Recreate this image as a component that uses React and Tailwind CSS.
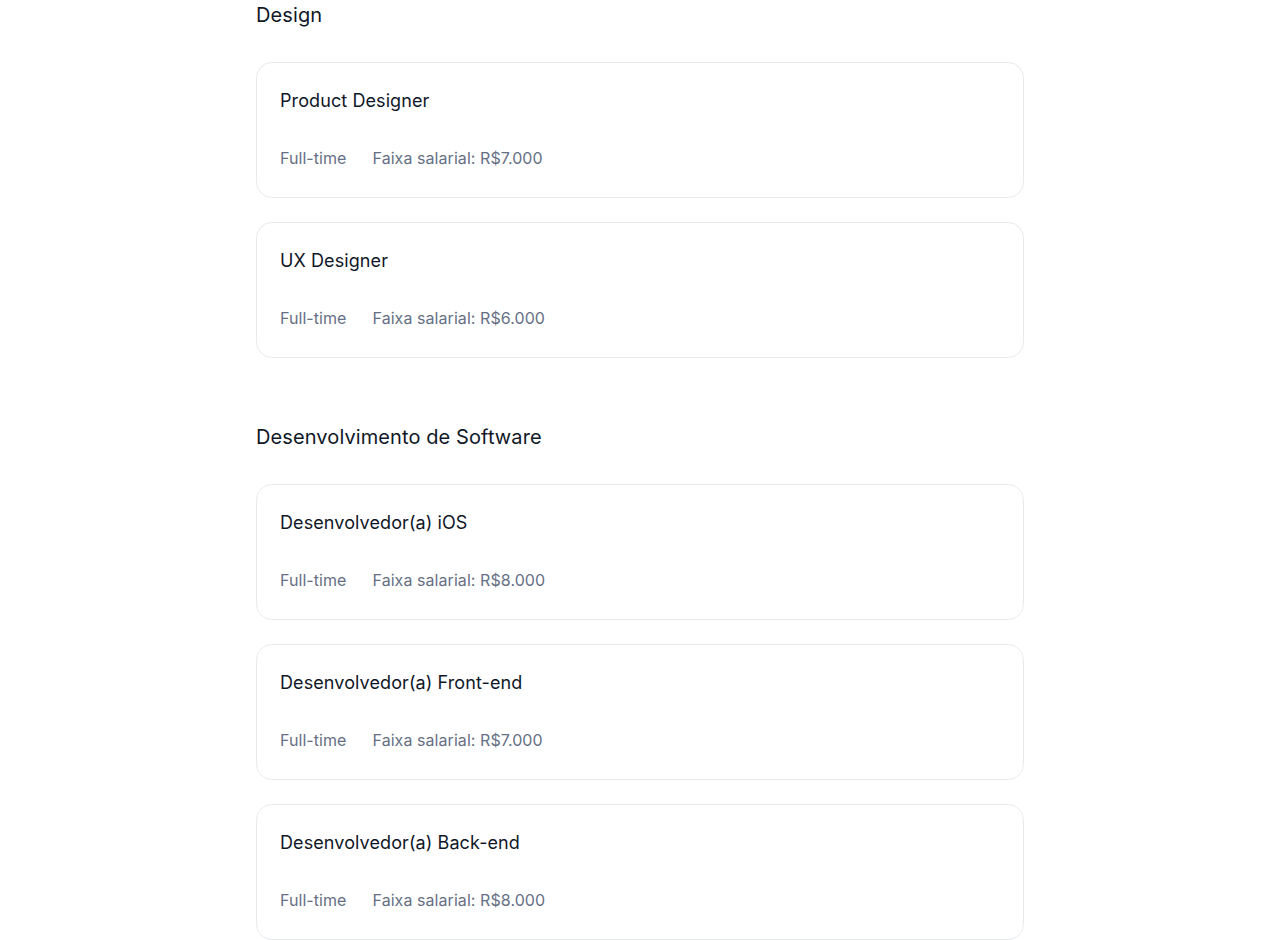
import React from "react";

const sections = [
  {
    title: "Design",
    jobs: [
      { name: "Product Designer", type: "Full-time", salary: "R$7.000" },
      { name: "UX Designer", type: "Full-time", salary: "R$6.000" },
    ],
  },
  {
    title: "Desenvolvimento de Software",
    jobs: [
      { name: "Desenvolvedor(a) iOS", type: "Full-time", salary: "R$8.000" },
      { name: "Desenvolvedor(a) Front-end", type: "Full-time", salary: "R$7.000" },
      { name: "Desenvolvedor(a) Back-end", type: "Full-time", salary: "R$8.000" },
    ],
  },
];

const JobCard = ({ job }) => {
  return (
    <div className="border border-[#e8eaee] rounded-2xl bg-white pl-[23px] pr-6 pt-6 pb-[27px]">
      <h3 className="text-lg leading-7 tracking-[0.005em] text-[#101828]">{job.name}</h3>
      <div className="mt-[31px] flex gap-[26px] text-base leading-6 tracking-[0.004em] text-[#667085]">
        <span>{job.type}</span>
        <span>Faixa salarial: {job.salary}</span>
      </div>
    </div>
  );
};

const App = () => {
  return (
    <div
      className="min-h-screen bg-white"
      style={{ fontFamily: "Inter, 'Noto Sans', sans-serif" }}
    >
      <div className="max-w-3xl mx-auto flex flex-col gap-[65px] pt-px pb-16">
        {sections.map((section) => (
          <section key={section.title}>
            <h2 className="text-xl leading-7 tracking-[0.005em] text-[#101828] mb-[33px]">
              {section.title}
            </h2>
            <div className="flex flex-col gap-6">
              {section.jobs.map((job) => (
                <JobCard key={job.name} job={job} />
              ))}
            </div>
          </section>
        ))}
      </div>
    </div>
  );
};

export default App;
